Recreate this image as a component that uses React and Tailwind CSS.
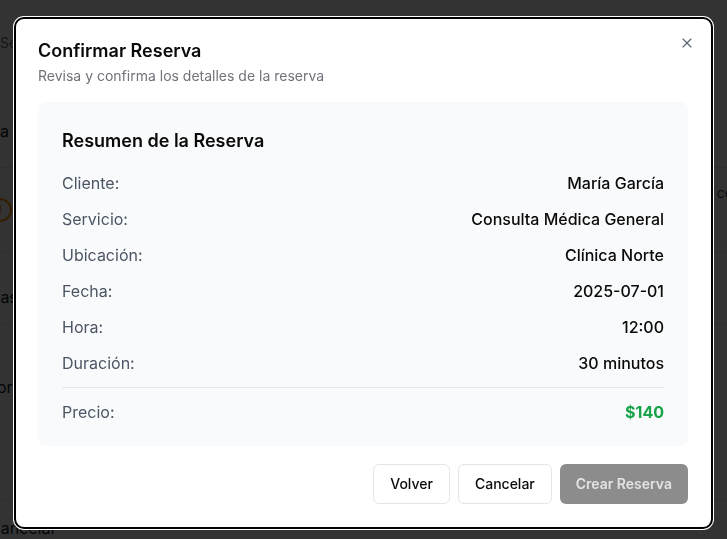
import React from 'react';
import { X } from 'lucide-react';

const rows = [
    ['Cliente:', 'María García'],
    ['Servicio:', 'Consulta Médica General'],
    ['Ubicación:', 'Clínica Norte'],
    ['Fecha:', '2025-07-01'],
    ['Hora:', '12:00'],
    ['Duración:', '30 minutos'],
];

const BackgroundPage = () => (
    <div className="absolute inset-0 overflow-hidden bg-white text-gray-900">
        <div className="flex flex-col">
            <div className="h-[33px]" />
            <div className="h-5 text-sm leading-5 text-gray-500 whitespace-nowrap">Seleccionar servicio</div>
            <div className="h-[66px]" />
            <div className="h-6 text-base leading-6 whitespace-nowrap">a la reserva</div>
            <div className="h-[25px] border-b border-gray-200" />
            <div className="flex h-[84px] items-center justify-between border-b border-gray-200">
                <div className="-ml-[12px] flex h-6 w-6 items-center justify-center rounded-full border-2 border-amber-500 text-xs font-bold text-amber-500">!</div>
                <div className="-mt-[34px] mr-[-6px] text-sm text-gray-700">ce</div>
            </div>
            <div className="h-[73px] flex items-start pt-[33px] border-b border-gray-200">
                <span className="-ml-[33px] text-base leading-6 whitespace-nowrap">Tareas</span>
            </div>
            <div className="h-[175px] flex items-start pt-[50px] border-b border-gray-200">
                <span className="-ml-[3px] text-base leading-6 whitespace-nowrap">or</span>
            </div>
            <div className="h-[16px]" />
            <div className="-ml-[11px] text-base leading-6 whitespace-nowrap">Cancelar</div>
        </div>
    </div>
);

export default function App() {
    return (
        <div className="relative h-[539px] w-[727px] overflow-hidden font-['Inter',sans-serif]">
            <BackgroundPage />
            <div className="fixed inset-0 z-50 flex items-start justify-center bg-black/80 pt-[19px]">
                <div className="relative w-[695px] rounded-lg bg-white pl-[22px] pr-[23px] pt-[18px] pb-[23px] outline-2 outline-black shadow-[0_0_0_3px_white]">
                    <button className="absolute right-4 top-4 text-gray-700 opacity-80">
                        <X className="h-4 w-4" strokeWidth={1.75} />
                    </button>

                    {/* Header */}
                    <h2 className="text-lg font-semibold leading-7 text-[#0a0a0a]">Confirmar Reserva</h2>
                    <p className="mt-px text-sm leading-5 text-[#71717a]">Revisa y confirma los detalles de la reserva</p>

                    {/* Summary */}
                    <div className="mt-4 rounded-lg bg-[#f9fafb] px-6 pt-[25px] pb-[22px]">
                        <h3 className="mb-4 text-lg font-semibold leading-7 text-[#0a0a0a]">Resumen de la Reserva</h3>
                        <div className="flex flex-col gap-3">
                            {rows.map(([label, value]) => (
                                <div key={label} className="flex items-center justify-between text-base leading-6">
                                    <span className="text-[#4b5563]">{label}</span>
                                    <span className="font-medium text-[#0a0a0a]">{value}</span>
                                </div>
                            ))}
                        </div>
                        <div className="mt-3 flex items-center justify-between border-t border-[#e5e7eb] pt-3 text-base leading-6">
                            <span className="text-[#4b5563]">Precio:</span>
                            <span className="font-bold text-[#16a34a]">$140</span>
                        </div>
                    </div>

                    {/* Footer */}
                    <div className="mt-[18px] flex justify-end gap-2">
                        <button className="h-10 rounded-md border border-[#e5e5e5] bg-white px-4 text-sm font-medium text-[#0a0a0a]">
                            Volver
                        </button>
                        <button className="h-10 rounded-md border border-[#e5e5e5] bg-white px-4 text-sm font-medium text-[#0a0a0a]">
                            Cancelar
                        </button>
                        <button disabled className="h-10 rounded-md bg-[#8c8c8c] px-4 text-sm font-semibold text-[#e2e2e2]">
                            Crear Reserva
                        </button>
                    </div>
                </div>
            </div>
        </div>
    );
}
